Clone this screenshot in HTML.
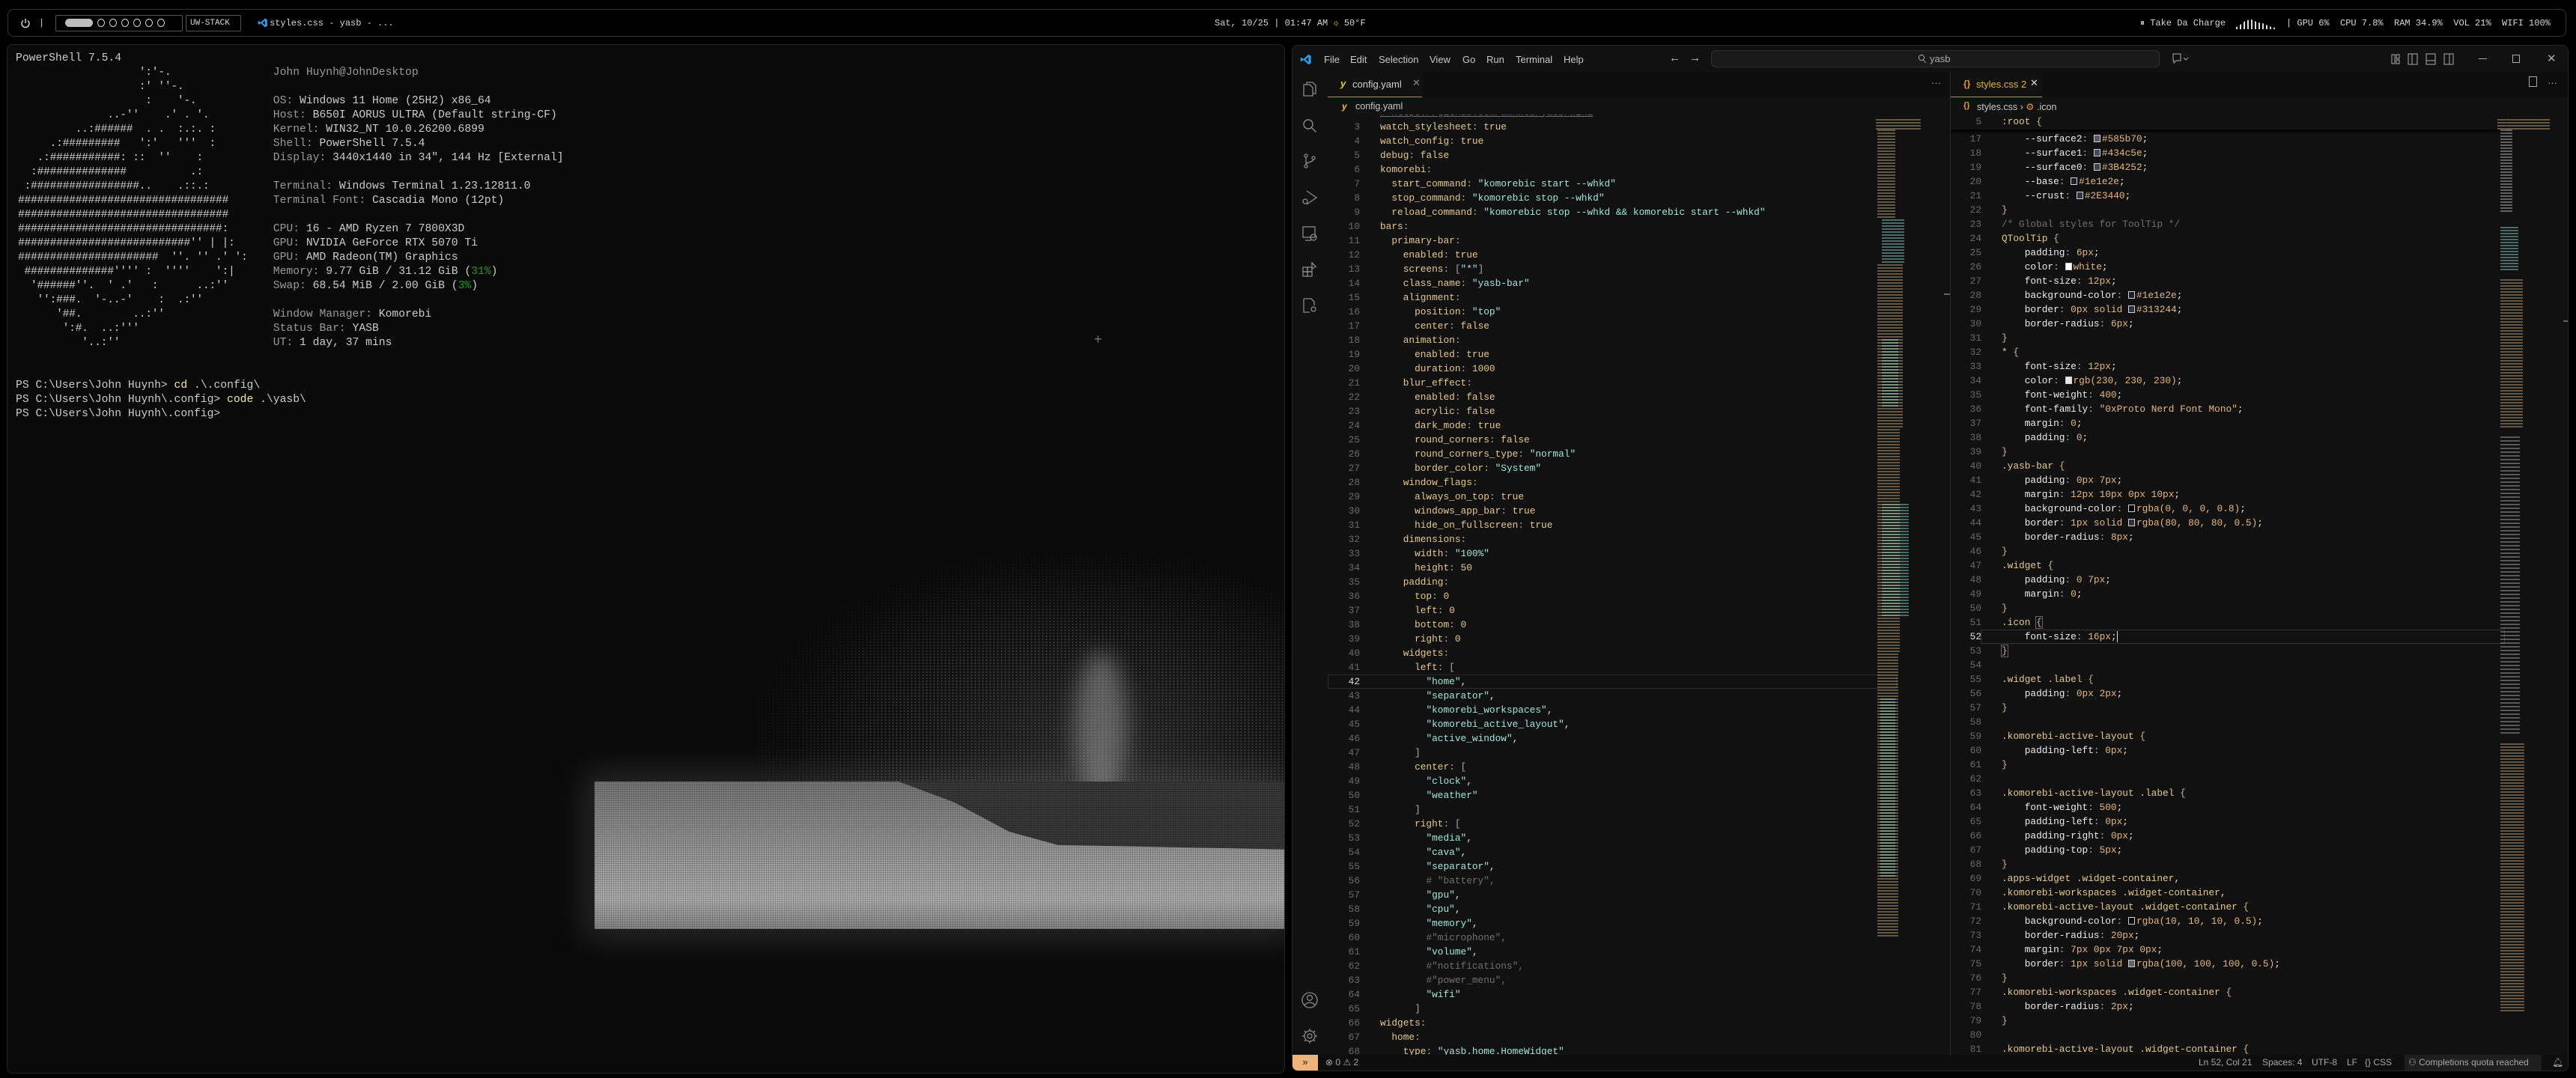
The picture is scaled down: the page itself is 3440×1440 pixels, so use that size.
<!DOCTYPE html>
<html><head><meta charset="utf-8">
<style>
*{margin:0;padding:0;box-sizing:border-box}
html,body{width:3440px;height:1440px;background:#000;overflow:hidden;font-family:"Liberation Sans",sans-serif}
.abs{position:absolute}
#bar{position:absolute;left:10px;top:12px;width:3417px;height:37px;border:1px solid #343434;border-radius:8px;background:#000;font-family:"Liberation Mono",monospace;font-size:12px;color:#d8d8d8}
#bar .t{position:absolute;top:11px;white-space:pre}
#term{position:absolute;left:9px;top:59px;width:1707px;height:1375px;border:1px solid #262626;border-radius:8px;background:#0a0a0a;overflow:hidden}
#tt{position:absolute;left:11px;top:9px;font-family:"Liberation Mono",monospace;font-size:14.7px;line-height:19px;color:#cccccc;white-space:pre}
#art{position:absolute;left:14px;top:28px;font-family:"Liberation Mono",monospace;font-size:14.7px;line-height:19px;color:#cfcfcf;white-space:pre;letter-spacing:-0.3px}
.lb{color:#9a9a9a}.gr{color:#13a10e}.yl{color:#f3e9a0}
#vs{position:absolute;left:1725px;top:60px;width:1705px;height:1371px;border:1px solid #262626;border-radius:8px;background:#111;overflow:hidden}
.menu{position:absolute;top:11px;font-size:13px;color:#c8c8c8}
.code{font-family:"Liberation Mono",monospace;font-size:12.8px;line-height:19px;white-space:pre;color:#e0e0e0}
.ln{font-family:"Liberation Mono",monospace;font-size:12.8px;line-height:19px;color:#6a6a6a;text-align:right;white-space:pre}
.k{color:#e6c88f}.s{color:#a3e6d5}.c{color:#707070}.p{color:#a8a8a8}.w{color:#ececec}.v{color:#e3b681}.se{color:#e6c88f}.b{color:#c9b98a}
.sw{display:inline-block;width:9px;height:10px;border:1px solid #cfcfcf;margin-right:2px;vertical-align:-1px}
.ai{position:absolute;left:11px;width:24px;height:24px}
.mm{position:absolute;background:repeating-linear-gradient(to bottom,rgba(200,175,130,.45) 0 2px,transparent 2px 4px)}
.mm2{position:absolute;background:repeating-linear-gradient(to bottom,rgba(150,215,200,.45) 0 2px,transparent 2px 4px)}
.st{position:absolute;top:5px;font-size:12px;color:#a8a8a8;white-space:pre}
.dots{background-image:radial-gradient(rgba(0,0,0,.35) 0.8px,transparent 1.2px);background-size:3px 3px}
.ldots{background-image:radial-gradient(rgba(140,140,140,.45) 0.9px,transparent 1.3px);background-size:5px 4px}
</style></head><body>

<div id="bar">
  <svg class="abs" style="left:16px;top:11px" width="14" height="14" viewBox="0 0 14 14"><path d="M4 3.5A5 5 0 1 0 10 3.5" fill="none" stroke="#ddd" stroke-width="1.4"/><path d="M7 1v6" stroke="#ddd" stroke-width="1.4"/></svg>
  <div class="t" style="left:41px">|</div>
  <div class="abs" style="left:63px;top:7px;width:170px;height:22px;border:1px solid #555;border-radius:2px"></div>
  <div class="abs" style="left:76px;top:12px;width:37px;height:11px;border-radius:6px;background:#bdbdbd"></div>
  <div class="abs" style="left:119px;top:12px;white-space:nowrap">
    <span style="display:inline-block;width:10px;height:11px;border:1.3px solid #ddd;border-radius:50%;margin-right:6px"></span><span style="display:inline-block;width:10px;height:11px;border:1.3px solid #ddd;border-radius:50%;margin-right:6px"></span><span style="display:inline-block;width:10px;height:11px;border:1.3px solid #ddd;border-radius:50%;margin-right:6px"></span><span style="display:inline-block;width:10px;height:11px;border:1.3px solid #ddd;border-radius:50%;margin-right:6px"></span><span style="display:inline-block;width:10px;height:11px;border:1.3px solid #ddd;border-radius:50%;margin-right:6px"></span><span style="display:inline-block;width:10px;height:11px;border:1.3px solid #ddd;border-radius:50%"></span>
  </div>
  <div class="abs" style="left:237px;top:7px;width:74px;height:22px;border:1px solid #555;border-radius:2px"></div>
  <div class="t" style="left:243px;font-size:11px;top:12px">UW-STACK</div>
  <svg class="abs" style="left:333px;top:10px" width="14" height="15" viewBox="0 0 24 24"><path d="M17 2l5 2.5v15L17 22 7 13l-4 3-2-1V9l2-1 4 3 10-9zm0 5l-6 5 6 5z" fill="#2f9be8"/></svg>
  <div class="t" style="left:349px">styles.css - yasb - ...</div>
  <div class="t" style="left:1611px">Sat, 10/25 | 01:47 AM <span style="color:#e8c36a">☼</span> 50°F</div>
  <div class="t" style="left:2847px">⏸ Take Da Charge</div>
  <div class="abs" style="left:2975px;top:13px;width:52px;height:13px;background:repeating-linear-gradient(to right,#ddd 0 2px,transparent 2px 5px);clip-path:polygon(0 80%,12% 50%,25% 10%,40% 0,55% 30%,70% 40%,85% 70%,100% 85%,100% 100%,0 100%)"></div>
  <div class="t" style="left:3042px">| GPU 6%  CPU 7.8%  RAM 34.9%  VOL 21%  WIFI 100%</div>
</div>

<div id="term">
  <div class="abs ldots" style="left:1000px;top:680px;width:720px;height:470px;-webkit-mask-image:radial-gradient(ellipse at 60% 55%,#000 40%,transparent 75%);mask-image:radial-gradient(ellipse at 60% 55%,#000 40%,transparent 75%)"></div>
  <div class="abs" style="left:1060px;top:700px;width:660px;height:440px;background:radial-gradient(ellipse at 60% 55%,rgba(90,90,90,.35),rgba(50,50,50,.2) 45%,rgba(20,20,20,0) 75%)"></div>
  <div class="abs" style="left:1425px;top:810px;width:70px;height:200px;border-radius:50%;background:rgba(170,170,170,.45);filter:blur(14px)"></div>
  <div class="abs" style="left:784px;top:984px;width:923px;height:197px;box-shadow:0 0 40px 14px rgba(200,200,200,.15)"></div>
  <div class="abs" style="left:784px;top:984px;width:923px;height:197px;background:#3a3a3a"></div>
  <div class="abs" style="left:784px;top:984px;width:923px;height:197px;background:linear-gradient(to bottom,#7a7a7a,#a4a4a4 55%,#b4b4b4 80%,#8a8a8a);clip-path:polygon(0 0,44% 0,52% 14%,60% 34%,67% 43%,100% 46%,100% 100%,0 100%)"></div>
  <div class="abs dots" style="left:784px;top:984px;width:923px;height:197px"></div>
  <div class="abs" style="left:1451px;top:383px;color:#777;font-size:18px">+</div>

  <div id="tt">PowerShell 7.5.4
                                       <span class="lb">John Huynh@JohnDesktop</span>

                                       <span class="lb">OS:</span> Windows 11 Home (25H2) x86_64
                                       <span class="lb">Host:</span> B650I AORUS ULTRA (Default string-CF)
                                       <span class="lb">Kernel:</span> WIN32_NT 10.0.26200.6899
                                       <span class="lb">Shell:</span> PowerShell 7.5.4
                                       <span class="lb">Display:</span> 3440x1440 in 34", 144 Hz [External]

                                       <span class="lb">Terminal:</span> Windows Terminal 1.23.12811.0
                                       <span class="lb">Terminal Font:</span> Cascadia Mono (12pt)

                                       <span class="lb">CPU:</span> 16 - AMD Ryzen 7 7800X3D
                                       <span class="lb">GPU:</span> NVIDIA GeForce RTX 5070 Ti
                                       <span class="lb">GPU:</span> AMD Radeon(TM) Graphics
                                       <span class="lb">Memory:</span> 9.77 GiB / 31.12 GiB (<span class="gr">31%</span>)
                                       <span class="lb">Swap:</span> 68.54 MiB / 2.00 GiB (<span class="gr">3%</span>)

                                       <span class="lb">Window Manager:</span> Komorebi
                                       <span class="lb">Status Bar:</span> YASB
                                       <span class="lb">UT:</span> 1 day, 37 mins


PS C:\Users\John Huynh&gt; <span class="yl">cd</span> .\.config\
PS C:\Users\John Huynh\.config&gt; <span class="yl">code</span> .\yasb\
PS C:\Users\John Huynh\.config&gt;</div>
  <div id="art">                   ':'-.
                   :' ''-.
                    :    '-.
              ..-''    .' . '.
         ..:######  . .  :.:. :
     .:#########   ':'   '''  :
   .:###########: ::  ''    :
  :##############          .:
 :#################..    .::.:
#################################
#################################
################################:
###########################'' | |:
######################  ''. '' .' ':
 ##############'''' :  ''''    ':|
  '######''.  ' .'   :      ..:''
   '':###.  '-..-'    :  .:''
      '##.        ..:''
       ':#.  ..:'''
          '..:''</div>
</div>

<div id="vs">
  <svg class="abs" style="left:10px;top:10px" width="16" height="17" viewBox="0 0 24 24"><path d="M17 2l5 2.5v15L17 22 7 13l-4 3-2-1V9l2-1 4 3 10-9zm0 5l-6 5 6 5z" fill="#2f9be8"/></svg>
  <div class="menu" style="left:42px">File</div>
  <div class="menu" style="left:77px">Edit</div>
  <div class="menu" style="left:115px">Selection</div>
  <div class="menu" style="left:183px">View</div>
  <div class="menu" style="left:227px">Go</div>
  <div class="menu" style="left:259px">Run</div>
  <div class="menu" style="left:298px">Terminal</div>
  <div class="menu" style="left:362px">Help</div>
  <div class="menu" style="left:503px;font-size:15px;top:8px">←</div>
  <div class="menu" style="left:530px;font-size:15px;top:8px">→</div>
  <div class="abs" style="left:559px;top:6px;width:599px;height:23px;background:#1a1a1a;border:1px solid #2e2e2e;border-radius:6px"></div>
  <svg class="abs" style="left:835px;top:11px" width="12" height="13" viewBox="0 0 12 13"><circle cx="5" cy="5" r="3.6" fill="none" stroke="#aaa"/><path d="M7.5 8l3 4" stroke="#aaa"/></svg>
  <div class="menu" style="left:851px;top:10px;color:#aaa">yasb</div>
  <svg class="abs" style="left:1173px;top:9px" width="24" height="16" viewBox="0 0 24 16"><path d="M3 2h10v9H7l-3 3v-3H3z" fill="none" stroke="#aaa"/><path d="M17 7l3 3 3-3" fill="none" stroke="#aaa"/></svg>
  <svg class="abs" style="left:1467px;top:10px" width="110" height="16" viewBox="0 0 110 16"><g fill="none" stroke="#aaa"><rect x="1" y="2" width="4" height="12"/><rect x="7" y="2" width="4" height="5"/><rect x="7" y="9" width="4" height="5"/><rect x="23" y="1" width="12" height="14"/><path d="M28 1v14"/><rect x="47" y="1" width="12" height="14"/><path d="M47 10h12"/><rect x="71" y="1" width="12" height="14"/><path d="M78 1v14"/></g></svg>
  <div class="abs" style="left:1584px;top:17px;width:11px;height:1px;background:#aaa"></div>
  <div class="abs" style="left:1629px;top:12px;width:10px;height:11px;border:1px solid #aaa"></div>
  <div class="menu" style="left:1675px;top:8px;color:#aaa;font-size:15px">✕</div>

  <svg class="ai" style="top:46px" viewBox="0 0 24 24" fill="none" stroke="#8a8a8a" stroke-width="1.3"><path d="M8 6V3h8l4 4v11h-4"/><path d="M4 6h8l4 4v11H4z"/></svg>
  <svg class="ai" style="top:95px" viewBox="0 0 24 24" fill="none" stroke="#8a8a8a" stroke-width="1.4"><circle cx="10" cy="10" r="6"/><path d="M14.5 14.5l6 6"/></svg>
  <svg class="ai" style="top:142px" viewBox="0 0 24 24" fill="none" stroke="#8a8a8a" stroke-width="1.3"><circle cx="7" cy="5" r="2"/><circle cx="7" cy="19" r="2"/><circle cx="17" cy="8" r="2"/><path d="M7 7v10M17 10c0 4-10 3-10 7"/></svg>
  <svg class="ai" style="top:191px" viewBox="0 0 24 24" fill="none" stroke="#8a8a8a" stroke-width="1.3"><path d="M8 3l13 9-13 9"/><circle cx="6" cy="17" r="3"/></svg>
  <svg class="ai" style="top:239px" viewBox="0 0 24 24" fill="none" stroke="#8a8a8a" stroke-width="1.3"><rect x="3" y="3" width="16" height="14"/><path d="M6 21h8"/><circle cx="17" cy="17" r="4"/></svg>
  <svg class="ai" style="top:287px" viewBox="0 0 24 24" fill="none" stroke="#8a8a8a" stroke-width="1.3"><rect x="3" y="9" width="6" height="6"/><rect x="9" y="9" width="6" height="6"/><rect x="3" y="15" width="6" height="6"/><rect x="9" y="15" width="6" height="6"/><path d="M15 3l5 5-5 3z"/></svg>
  <svg class="ai" style="top:335px" viewBox="0 0 24 24" fill="none" stroke="#8a8a8a" stroke-width="1.3"><path d="M4 3h10l4 4v5M4 3v18h8"/><circle cx="17" cy="17" r="3"/></svg>
  <svg class="ai" style="top:1263px" viewBox="0 0 24 24" fill="none" stroke="#8a8a8a" stroke-width="1.3"><circle cx="12" cy="12" r="10"/><circle cx="12" cy="9" r="3.5"/><path d="M5 19c3-5 11-5 14 0"/></svg>
  <svg class="ai" style="top:1311px" viewBox="0 0 24 24" fill="none" stroke="#8a8a8a" stroke-width="1.3"><circle cx="12" cy="12" r="3"/><path d="M12 2v3M12 19v3M2 12h3M19 12h3M5 5l2 2M17 17l2 2M5 19l2-2M17 7l2-2"/><circle cx="12" cy="12" r="7"/></svg>

  <div class="abs" style="left:47px;top:35px;width:831px;height:34px;background:#0d0d0d"></div>
  <div class="abs" style="left:47px;top:35px;width:126px;height:34px;background:#111;border-bottom:1px solid #a8956e"></div>
  <div class="abs" style="left:64px;top:43px;color:#e8c33f;font-weight:bold;font-size:13px;font-style:italic">y</div>
  <div class="abs" style="left:80px;top:44px;font-size:13px;color:#d0d0d0">config.yaml</div>
  <div class="abs" style="left:160px;top:42px;font-size:13px;color:#888">✕</div>
  <div class="abs" style="left:853px;top:42px;font-size:13px;color:#aaa">···</div>
  <div class="abs" style="left:66px;top:74px;color:#e8c33f;font-weight:bold;font-size:12px;font-style:italic">y</div>
  <div class="abs" style="left:84px;top:74px;font-size:12.5px;color:#c8c8c8">config.yaml</div>

  <div class="abs" style="left:47px;top:92px;width:831px;height:1256px;overflow:hidden">
    <div class="abs" style="left:0;top:747.5px;width:760px;height:19px;border:1px solid #2a2a2a"></div>
    <div class="ln abs" style="left:0;width:43px;top:-31.5px"> 
 
3
4
5
6
7
8
9
10
11
12
13
14
15
16
17
18
19
20
21
22
23
24
25
26
27
28
29
30
31
32
33
34
35
36
37
38
39
40
41
<span style="color:#ddd">42</span>
43
44
45
46
47
48
49
50
51
52
53
54
55
56
57
58
59
60
61
62
63
64
65
66
67
68</div>
    <div class="code abs" style="left:70px;top:-31.5px"><span class="c">
</span><span class="c" style="text-decoration:underline"># https://github.com/amnweb/yasb/wiki</span>
<span class="k">watch_stylesheet</span><span class="p">:</span> <span class="k">true</span>
<span class="k">watch_config</span><span class="p">:</span> <span class="k">true</span>
<span class="k">debug</span><span class="p">:</span> <span class="k">false</span>
<span class="k">komorebi</span><span class="p">:</span>
  <span class="k">start_command</span><span class="p">:</span> <span class="s">"komorebic start --whkd"</span>
  <span class="k">stop_command</span><span class="p">:</span> <span class="s">"komorebic stop --whkd"</span>
  <span class="k">reload_command</span><span class="p">:</span> <span class="s">"komorebic stop --whkd &amp;&amp; komorebic start --whkd"</span>
<span class="k">bars</span><span class="p">:</span>
  <span class="k">primary-bar</span><span class="p">:</span>
    <span class="k">enabled</span><span class="p">:</span> <span class="k">true</span>
    <span class="k">screens</span><span class="p">:</span> <span class="p">[</span><span class="s">"*"</span><span class="p">]</span>
    <span class="k">class_name</span><span class="p">:</span> <span class="s">"yasb-bar"</span>
    <span class="k">alignment</span><span class="p">:</span>
      <span class="k">position</span><span class="p">:</span> <span class="s">"top"</span>
      <span class="k">center</span><span class="p">:</span> <span class="k">false</span>
    <span class="k">animation</span><span class="p">:</span>
      <span class="k">enabled</span><span class="p">:</span> <span class="k">true</span>
      <span class="k">duration</span><span class="p">:</span> <span class="k">1000</span>
    <span class="k">blur_effect</span><span class="p">:</span>
      <span class="k">enabled</span><span class="p">:</span> <span class="k">false</span>
      <span class="k">acrylic</span><span class="p">:</span> <span class="k">false</span>
      <span class="k">dark_mode</span><span class="p">:</span> <span class="k">true</span>
      <span class="k">round_corners</span><span class="p">:</span> <span class="k">false</span>
      <span class="k">round_corners_type</span><span class="p">:</span> <span class="s">"normal"</span>
      <span class="k">border_color</span><span class="p">:</span> <span class="s">"System"</span>
    <span class="k">window_flags</span><span class="p">:</span>
      <span class="k">always_on_top</span><span class="p">:</span> <span class="k">true</span>
      <span class="k">windows_app_bar</span><span class="p">:</span> <span class="k">true</span>
      <span class="k">hide_on_fullscreen</span><span class="p">:</span> <span class="k">true</span>
    <span class="k">dimensions</span><span class="p">:</span>
      <span class="k">width</span><span class="p">:</span> <span class="s">"100%"</span>
      <span class="k">height</span><span class="p">:</span> <span class="k">50</span>
    <span class="k">padding</span><span class="p">:</span>
      <span class="k">top</span><span class="p">:</span> <span class="k">0</span>
      <span class="k">left</span><span class="p">:</span> <span class="k">0</span>
      <span class="k">bottom</span><span class="p">:</span> <span class="k">0</span>
      <span class="k">right</span><span class="p">:</span> <span class="k">0</span>
    <span class="k">widgets</span><span class="p">:</span>
      <span class="k">left</span><span class="p">:</span> <span class="p">[</span>
        <span class="s">"home"</span>,
        <span class="s">"separator"</span>,
        <span class="s">"komorebi_workspaces"</span>,
        <span class="s">"komorebi_active_layout"</span>,
        <span class="s">"active_window"</span>,
      <span class="p">]</span>
      <span class="k">center</span><span class="p">:</span> <span class="p">[</span>
        <span class="s">"clock"</span>,
        <span class="s">"weather"</span>
      <span class="p">]</span>
      <span class="k">right</span><span class="p">:</span> <span class="p">[</span>
        <span class="s">"media"</span>,
        <span class="s">"cava"</span>,
        <span class="s">"separator"</span>,
        <span class="c"># "battery",</span>
        <span class="s">"gpu"</span>,
        <span class="s">"cpu"</span>,
        <span class="s">"memory"</span>,
        <span class="c">#"microphone",</span>
        <span class="s">"volume"</span>,
        <span class="c">#"notifications",</span>
        <span class="c">#"power_menu",</span>
        <span class="s">"wifi"</span>
      <span class="p">]</span>
<span class="k">widgets</span><span class="p">:</span>
  <span class="k">home</span><span class="p">:</span>
    <span class="k">type</span><span class="p">:</span> <span class="s">"yasb.home.HomeWidget"</span></div>
    <div class="mm" style="left:732px;top:6px;width:60px;height:14px"></div>
    <div class="mm" style="left:734px;top:20px;width:24px;height:120px"></div>
    <div class="mm2" style="left:740px;top:140px;width:30px;height:60px"></div>
    <div class="mm" style="left:734px;top:200px;width:34px;height:220px"></div>
    <div class="mm2" style="left:740px;top:300px;width:22px;height:90px"></div>
    <div class="mm" style="left:734px;top:420px;width:30px;height:300px"></div>
    <div class="mm2" style="left:740px;top:520px;width:36px;height:150px"></div>
    <div class="mm" style="left:734px;top:720px;width:28px;height:380px"></div>
    <div class="mm2" style="left:738px;top:780px;width:20px;height:240px"></div>
    <div class="abs" style="left:823px;top:239px;width:8px;height:2px;background:#666"></div>
  </div>
  <div class="abs" style="left:878px;top:35px;width:1px;height:1313px;background:#2a2a2a"></div>

  <div class="abs" style="left:879px;top:35px;width:826px;height:34px;background:#0d0d0d"></div>
  <div class="abs" style="left:879px;top:35px;width:122px;height:34px;background:#111;border-bottom:1px solid #a8956e"></div>
  <div class="abs" style="left:896px;top:44px;color:#e59a3a;font-size:12px;font-weight:bold">{}</div>
  <div class="abs" style="left:913px;top:44px;font-size:13px;color:#e2b340">styles.css 2</div>
  <div class="abs" style="left:985px;top:42px;font-size:13px;color:#ddd">✕</div>
  <div class="abs" style="left:1651px;top:41px;width:11px;height:14px;border:1px solid #aaa"></div>
  <div class="abs" style="left:1676px;top:42px;font-size:13px;color:#aaa">···</div>
  <div class="abs" style="left:896px;top:74px;color:#e59a3a;font-size:11px;font-weight:bold">{}</div>
  <div class="abs" style="left:914px;top:74px;font-size:12.5px;color:#c8c8c8">styles.css  ›  <span style="color:#e59a3a">⚙</span> .icon</div>

  <div class="abs" style="left:879px;top:92px;width:826px;height:1256px;overflow:hidden">
    <div class="abs" style="left:40px;top:687.5px;width:700px;height:19px;border:1px solid #333"></div>
    <div class="ln abs" style="left:0;width:41px;top:22.5px">17
18
19
20
21
22
23
24
25
26
27
28
29
30
31
32
33
34
35
36
37
38
39
40
41
42
43
44
45
46
47
48
49
50
51
<span style="color:#ddd">52</span>
53
54
55
56
57
58
59
60
61
62
63
64
65
66
67
68
69
70
71
72
73
74
75
76
77
78
79
80
81</div>
    <div class="code abs" style="left:68px;top:22.5px">    <span class="w">--surface2</span><span class="p">:</span> <span class="sw" style="background:#585b70"></span><span class="v">#585b70</span>;
    <span class="w">--surface1</span><span class="p">:</span> <span class="sw" style="background:#434c5e"></span><span class="v">#434c5e</span>;
    <span class="w">--surface0</span><span class="p">:</span> <span class="sw" style="background:#3B4252"></span><span class="v">#3B4252</span>;
    <span class="w">--base</span><span class="p">:</span> <span class="sw" style="background:#1e1e2e"></span><span class="v">#1e1e2e</span>;
    <span class="w">--crust</span><span class="p">:</span> <span class="sw" style="background:#2E3440"></span><span class="v">#2E3440</span>;
<span class="b">}</span>
<span class="c">/* Global styles for ToolTip */</span>
<span class="se">QToolTip</span> <span class="b">{</span>
    <span class="w">padding</span><span class="p">:</span> <span class="v">6px</span>;
    <span class="w">color</span><span class="p">:</span> <span class="sw" style="background:#fff"></span><span class="v">white</span>;
    <span class="w">font-size</span><span class="p">:</span> <span class="v">12px</span>;
    <span class="w">background-color</span><span class="p">:</span> <span class="sw" style="background:#1e1e2e"></span><span class="v">#1e1e2e</span>;
    <span class="w">border</span><span class="p">:</span> <span class="v">0px solid</span> <span class="sw" style="background:#313244"></span><span class="v">#313244</span>;
    <span class="w">border-radius</span><span class="p">:</span> <span class="v">6px</span>;
<span class="b">}</span>
<span class="se">*</span> <span class="b">{</span>
    <span class="w">font-size</span><span class="p">:</span> <span class="v">12px</span>;
    <span class="w">color</span><span class="p">:</span> <span class="sw" style="background:#e6e6e6"></span><span class="v">rgb(230, 230, 230)</span>;
    <span class="w">font-weight</span><span class="p">:</span> <span class="v">400</span>;
    <span class="w">font-family</span><span class="p">:</span> <span class="v">"0xProto Nerd Font Mono"</span>;
    <span class="w">margin</span><span class="p">:</span> <span class="v">0</span>;
    <span class="w">padding</span><span class="p">:</span> <span class="v">0</span>;
<span class="b">}</span>
<span class="se">.yasb-bar</span> <span class="b">{</span>
    <span class="w">padding</span><span class="p">:</span> <span class="v">0px 7px</span>;
    <span class="w">margin</span><span class="p">:</span> <span class="v">12px 10px 0px 10px</span>;
    <span class="w">background-color</span><span class="p">:</span> <span class="sw" style="background:#000"></span><span class="v">rgba(0, 0, 0, 0.8)</span>;
    <span class="w">border</span><span class="p">:</span> <span class="v">1px solid</span> <span class="sw" style="background:#333"></span><span class="v">rgba(80, 80, 80, 0.5)</span>;
    <span class="w">border-radius</span><span class="p">:</span> <span class="v">8px</span>;
<span class="b">}</span>
<span class="se">.widget</span> <span class="b">{</span>
    <span class="w">padding</span><span class="p">:</span> <span class="v">0 7px</span>;
    <span class="w">margin</span><span class="p">:</span> <span class="v">0</span>;
<span class="b">}</span>
<span class="se">.icon</span> <span class="b" style="outline:1px solid #666">{</span>
    <span class="w">font-size</span><span class="p">:</span> <span class="v">16px</span>;<span style="border-left:1.5px solid #ddd"></span>
<span class="b" style="outline:1px solid #666">}</span>

<span class="se">.widget .label</span> <span class="b">{</span>
    <span class="w">padding</span><span class="p">:</span> <span class="v">0px 2px</span>;
<span class="b">}</span>

<span class="se">.komorebi-active-layout</span> <span class="b">{</span>
    <span class="w">padding-left</span><span class="p">:</span> <span class="v">0px</span>;
<span class="b">}</span>

<span class="se">.komorebi-active-layout .label</span> <span class="b">{</span>
    <span class="w">font-weight</span><span class="p">:</span> <span class="v">500</span>;
    <span class="w">padding-left</span><span class="p">:</span> <span class="v">0px</span>;
    <span class="w">padding-right</span><span class="p">:</span> <span class="v">0px</span>;
    <span class="w">padding-top</span><span class="p">:</span> <span class="v">5px</span>;
<span class="b">}</span>
<span class="se">.apps-widget .widget-container</span>,
<span class="se">.komorebi-workspaces .widget-container</span>,
<span class="se">.komorebi-active-layout .widget-container</span> <span class="b">{</span>
    <span class="w">background-color</span><span class="p">:</span> <span class="sw" style="background:#0a0a0a"></span><span class="v">rgba(10, 10, 10, 0.5)</span>;
    <span class="w">border-radius</span><span class="p">:</span> <span class="v">20px</span>;
    <span class="w">margin</span><span class="p">:</span> <span class="v">7px 0px 7px 0px</span>;
    <span class="w">border</span><span class="p">:</span> <span class="v">1px solid</span> <span class="sw" style="background:#646464"></span><span class="v">rgba(100, 100, 100, 0.5)</span>;
<span class="b">}</span>
<span class="se">.komorebi-workspaces .widget-container</span> <span class="b">{</span>
    <span class="w">border-radius</span><span class="p">:</span> <span class="v">2px</span>;
<span class="b">}</span>

<span class="se">.komorebi-active-layout .widget-container</span> <span class="b">{</span></div>
    <div class="abs" style="left:0;top:0;width:740px;height:20px;background:#111;box-shadow:0 3px 4px #000"></div>
    <div class="ln abs" style="left:0;width:41px;top:0">5</div>
    <div class="code abs" style="left:68px;top:0"><span class="se">:root</span> <span class="b">{</span></div>
    <div class="mm" style="left:730px;top:6px;width:70px;height:14px"></div>
    <div class="mm" style="left:734px;top:20px;width:16px;height:110px;background:repeating-linear-gradient(to bottom,rgba(220,220,220,.4) 0 2px,transparent 2px 4px)"></div>
    <div class="mm2" style="left:734px;top:150px;width:24px;height:60px"></div>
    <div class="mm" style="left:734px;top:220px;width:30px;height:200px"></div>
    <div class="mm" style="left:734px;top:430px;width:26px;height:400px;background:repeating-linear-gradient(to bottom,rgba(220,220,220,.35) 0 2px,transparent 2px 5px)"></div>
    <div class="mm" style="left:734px;top:840px;width:32px;height:360px"></div>
    <div class="abs" style="left:818px;top:275px;width:8px;height:2px;background:#666"></div>
  </div>

  <div class="abs" style="left:0;top:1348px;width:1705px;height:21px;background:#0e0e0e"></div>
  <div class="abs" style="left:0;top:1348px;width:34px;height:21px;background:#f0b47a;color:#222;font-size:13px;text-align:center;line-height:20px">»</div>
  <div class="st" style="left:44px;top:1351px">⊗ 0 ⚠ 2</div>
  <div class="st" style="left:1210px;top:1351px">Ln 52, Col 21</div>
  <div class="st" style="left:1295px;top:1351px">Spaces: 4</div>
  <div class="st" style="left:1361px;top:1351px">UTF-8</div>
  <div class="st" style="left:1408px;top:1351px">LF</div>
  <div class="st" style="left:1432px;top:1351px">{} CSS</div>
  <div class="abs" style="left:1485px;top:1348px;width:183px;height:21px;background:#1e1e1e"></div>
  <div class="st" style="left:1490px;top:1351px">⚇ Completions quota reached</div>
  <div class="st" style="left:1682px;top:1351px">🔔︎</div>
</div>
</body></html>
